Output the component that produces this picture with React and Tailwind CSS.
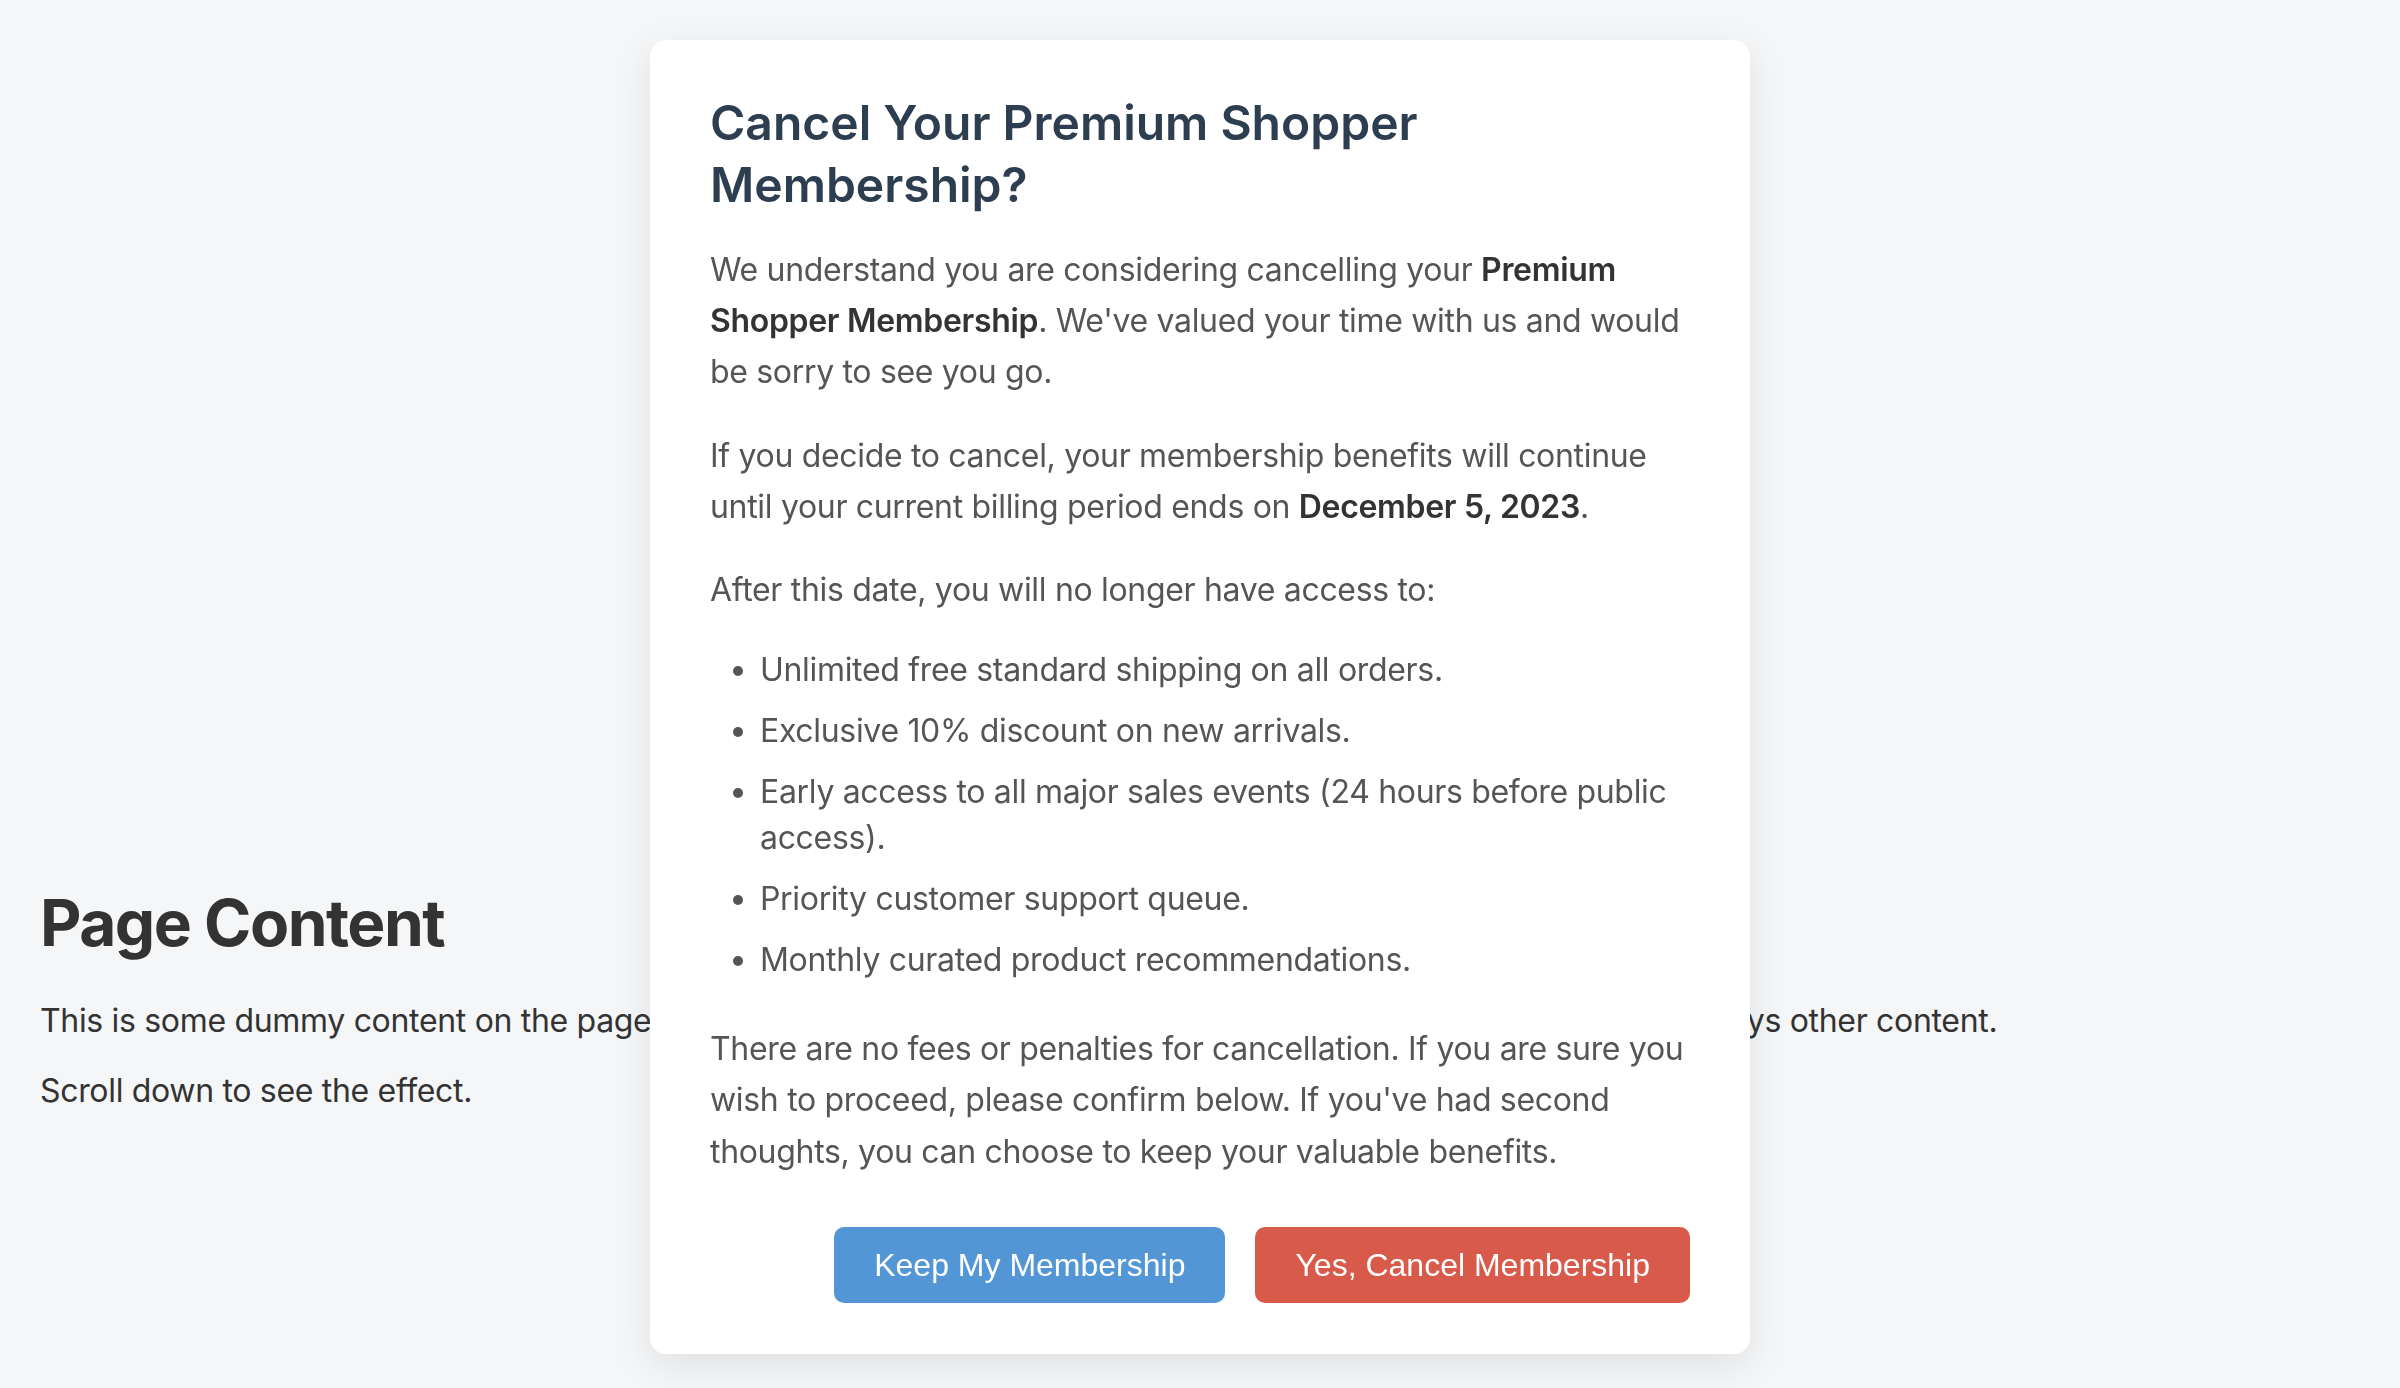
export default function App() {
  return (
    <div className="min-h-screen bg-[#f5f6f8] font-['Inter',sans-serif] text-[#333] tracking-[-0.02em]">
      {/* Page content behind the modal */}
      <main className="px-[40px] pt-[885px] pb-10">
        <h1 className="text-[64px] font-bold leading-[1.2] mb-[40px] tracking-[-1.5px]">
          Page Content
        </h1>
        <p className="text-[32px] leading-[1.2] mb-[32px]">
          This is some dummy content on the page to demonstrate how the modal appears in the center of screen and overlays other content.
        </p>
        <p className="text-[32px] leading-[1.2]">Scroll down to see the effect.</p>
      </main>

      {/* Modal */}
      <div className="fixed top-[40px] left-1/2 -translate-x-1/2 w-[1100px] bg-white rounded-[16px] px-[60px] pt-[52px] pb-[51px] shadow-[0_12px_40px_rgba(0,0,0,0.09)]">
        <h2 className="text-[48px] font-semibold leading-[62px] text-[#2c3e50] mb-[28px] tracking-normal">
          Cancel Your Premium Shopper
          <br />
          Membership?
        </h2>

        <div className="text-[32px] leading-[1.6] text-[#555]">
          <p className="mb-[32px]">
            We understand you are considering cancelling your{" "}
            <strong className="font-semibold text-[#333]">Premium Shopper Membership</strong>. We've valued your
            time with us and would be sorry to see you go.
          </p>
          <p className="mb-[32px]">
            If you decide to cancel, your membership benefits will continue until your current billing period ends on{" "}
            <strong className="font-semibold text-[#333]">December 5, 2023</strong>.
          </p>
          <p className="mb-[32px]">After this date, you will no longer have access to:</p>

          <ul className="list-disc pl-[50px] mb-[40px] leading-[46px]">
            <li className="mb-[15px]">Unlimited free standard shipping on all orders.</li>
            <li className="mb-[15px]">Exclusive 10% discount on new arrivals.</li>
            <li className="mb-[15px]">Early access to all major sales events (24 hours before public access).</li>
            <li className="mb-[15px]">Priority customer support queue.</li>
            <li>Monthly curated product recommendations.</li>
          </ul>

          <p>
            There are no fees or penalties for cancellation. If you are sure you wish to proceed, please confirm
            below. If you've had second thoughts, you can choose to keep your valuable benefits.
          </p>
        </div>

        <div className="flex justify-end gap-[30px] mt-[50px] font-['Liberation_Sans',Arial,sans-serif] tracking-normal">
          <button className="bg-[#5296d5] text-white text-[32px] leading-[36px] px-[40px] py-[20px] rounded-[10px]">
            Keep My Membership
          </button>
          <button className="bg-[#d85a4a] text-white text-[32px] leading-[36px] px-[40px] py-[20px] rounded-[10px]">
            Yes, Cancel Membership
          </button>
        </div>
      </div>
    </div>
  );
}
